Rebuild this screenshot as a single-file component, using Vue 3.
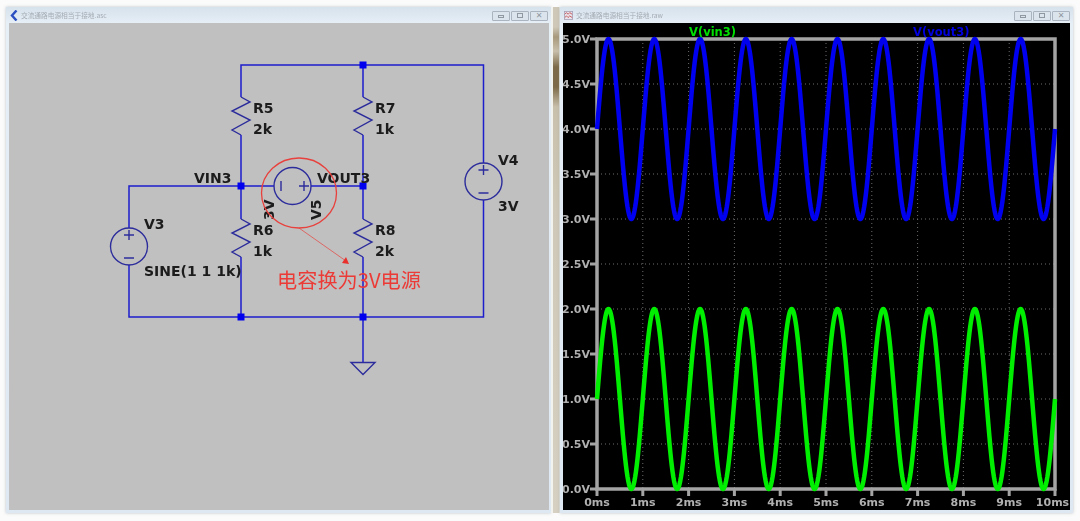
<script setup>
import { computed } from 'vue';

const plot = { left: 597, right: 1055, top: 39, bottom: 489 };
const msWidth = (plot.right - plot.left) / 10;
const voltHeight = (plot.bottom - plot.top) / 5;

const xAt = (ms) => plot.left + ms * msWidth;
const yAt = (v) => plot.bottom - v * voltHeight;

const sineWave = (offset) => {
  const points = [];
  for (let i = 0; i <= 600; i++) {
    const ms = i / 60;
    const v = offset + Math.sin(2 * Math.PI * ms);
    points.push(`${xAt(ms).toFixed(2)},${yAt(v).toFixed(2)}`);
  }
  return points.join(' ');
};

const vin = computed(() => sineWave(1));
const vout = computed(() => sineWave(4));

const msTicks = Array.from({ length: 11 }, (_, i) => ({ x: xAt(i), label: `${i}ms` }));
const voltTicks = Array.from({ length: 11 }, (_, i) => ({ y: yAt(i / 2), label: `${(i / 2).toFixed(1)}V` }));

const zigzag = (x, y) =>
  `${x},${y} ${x + 9},${y + 5} ${x - 9},${y + 14} ${x + 9},${y + 23} ${x - 9},${y + 33} ${x},${y + 38}`;

const resistors = [
  { x: 241, y: 97, name: 'R5', value: '2k' },
  { x: 363, y: 97, name: 'R7', value: '1k' },
  { x: 241, y: 219, name: 'R6', value: '1k' },
  { x: 363, y: 219, name: 'R8', value: '2k' }
];

const wires = [
  'M241 97V65H483.5V163',
  'M483.5 200V317H129V265',
  'M129 228V186H274',
  'M311 186H363',
  'M241 135V219',
  'M241 257V317',
  'M363 65V97',
  'M363 135V219',
  'M363 257V362'
];

const junctions = [
  [363, 65],
  [241, 186],
  [363, 186],
  [241, 317],
  [363, 317]
];

const sources = [
  { x: 129, y: 246.5 },
  { x: 483.5, y: 181.5 }
];
</script>

<template>
  <div class="desktop">
    <section class="window left-window">
      <header class="titlebar">
        <svg class="app-icon" width="8" height="11" viewBox="0 0 8 11">
          <path d="M6.5 .5 2 5.5l4.5 5" fill="none" stroke="#2b4fc0" stroke-width="2.4" />
        </svg>
        <span class="title">交流通路电源相当于接地.asc</span>
        <div class="win-buttons">
          <span class="win-btn"><i class="min"></i></span>
          <span class="win-btn"><i class="max"></i></span>
          <span class="win-btn"><i class="close">✕</i></span>
        </div>
      </header>
      <svg class="schematic" viewBox="9 23 540 487" width="540" height="487">
        <path v-for="d in wires" :key="d" :d="d" class="wire" />
        <polyline v-for="r in resistors" :key="r.name" :points="zigzag(r.x, r.y)" class="symbol" />
        <template v-for="r in resistors" :key="r.name + 'label'">
          <text :x="r.x + 12" :y="r.y + 16" class="label">{{ r.name }}</text>
          <text :x="r.x + 12" :y="r.y + 37" class="label">{{ r.value }}</text>
        </template>
        <rect v-for="j in junctions" :key="j.join()" :x="j[0] - 3.5" :y="j[1] - 3.5" width="7" height="7" fill="#0000ee" />

        <g v-for="s in sources" :key="s.x" class="symbol">
          <circle :cx="s.x" :cy="s.y" r="18.5" />
          <path :d="`M${s.x - 5} ${s.y - 11.5}h10M${s.x} ${s.y - 16.5}v10M${s.x - 5} ${s.y + 11.5}h10`" />
        </g>
        <g class="symbol">
          <circle cx="292.5" cy="186" r="18.5" />
          <path d="M281 181v10M299 186h10M304 181v10" />
          <path d="M351 362.5h24l-12 12z" />
        </g>

        <text x="194" y="183" class="label">VIN3</text>
        <text x="317" y="183" class="label">VOUT3</text>
        <text x="144" y="229" class="label">V3</text>
        <text x="144" y="276" class="label">SINE(1 1 1k)</text>
        <text x="498" y="165" class="label">V4</text>
        <text x="498" y="211" class="label">3V</text>
        <text transform="translate(274 220) rotate(-90)" class="label">3V</text>
        <text transform="translate(321 220) rotate(-90)" class="label">V5</text>

        <ellipse cx="299" cy="193" rx="37.5" ry="35" class="mark" />
        <path d="M299 228 346 261" class="mark thin" />
        <path d="M349 264 342 263 346 257z" fill="#e8302c" />
        <text x="277" y="288" class="note">电容换为3V电源</text>
      </svg>
    </section>

    <div class="splitter"></div>

    <section class="window right-window">
      <header class="titlebar">
        <svg class="app-icon" width="9" height="9" viewBox="0 0 11 11">
          <rect x="0.5" y="0.5" width="10" height="10" fill="#e8e4ec" stroke="#a8a0b8" />
          <path d="M1 4 3 2l2 2 2-2 3 2M1 8l2-2 2 2 2-2 3 2" fill="none" stroke="#c04040" />
        </svg>
        <span class="title">交流通路电源相当于接地.raw</span>
        <div class="win-buttons">
          <span class="win-btn"><i class="min"></i></span>
          <span class="win-btn"><i class="max"></i></span>
          <span class="win-btn"><i class="close">✕</i></span>
        </div>
      </header>
      <svg class="waveform" viewBox="563 23 507 487" width="507" height="487">
        <line v-for="t in msTicks.slice(1, 10)" :key="t.x" :x1="t.x" :x2="t.x" :y1="plot.top" :y2="plot.bottom" class="grid" />
        <line v-for="t in voltTicks.slice(1, 10)" :key="t.y" :x1="plot.left" :x2="plot.right" :y1="t.y" :y2="t.y" class="grid" />

        <rect :x="plot.left" :y="plot.top" :width="plot.right - plot.left" :height="plot.bottom - plot.top" class="frame" />
        <line v-for="t in msTicks" :key="t.label" :x1="t.x" :x2="t.x" :y1="plot.bottom" :y2="plot.bottom + 7" class="tick" />
        <line v-for="t in voltTicks" :key="t.label" :x1="plot.left - 7" :x2="plot.left" :y1="t.y" :y2="t.y" class="tick" />

        <polyline :points="vout" class="trace blue" />
        <polyline :points="vin" class="trace green" />

        <text v-for="t in voltTicks" :key="t.label" :x="plot.left - 7" :y="t.y + 4" class="axis" text-anchor="end">{{ t.label }}</text>
        <text v-for="t in msTicks" :key="t.label" :x="Math.min(t.x, 1052.5)" y="506" class="axis" text-anchor="middle">{{ t.label }}</text>

        <text x="689" y="36" class="legend" fill="#00e000">V(vin3)</text>
        <text x="913" y="36" class="legend" fill="#0000e0">V(vout3)</text>
      </svg>
    </section>
  </div>
</template>

<style scoped>
.desktop {
  width: 1080px;
  height: 521px;
  box-sizing: border-box;
  padding: 7px 7px 8px 6px;
  display: flex;
  background: #fbfbfb;
  overflow: hidden;
}

.window {
  display: flex;
  flex-direction: column;
  box-sizing: border-box;
  padding: 0 3px 3px;
  background: linear-gradient(#d6e2ec, #e6eef6 16px, #dde8f2);
  box-shadow: 0 0 3px rgba(120, 130, 140, 0.45);
}

.left-window {
  width: 545px;
}

.right-window {
  width: 513px;
}

.splitter {
  width: 9px;
  box-sizing: border-box;
  background: linear-gradient(90deg, #f2f2ee 0 22%, transparent 22% 90%, #e6e6df 90%),
    linear-gradient(#cfc8b8 0 20px, #a8997c 30px, #c9c0ac 44px, #7d6a48 60px, #7d6a48 80px, #c9c0ac 100px, #cfc8b8 200px, #d6d0c2 100%);
}

.titlebar {
  height: 16px;
  display: flex;
  align-items: center;
  gap: 3px;
  flex-shrink: 0;
}

.app-icon {
  flex-shrink: 0;
  margin-left: 1px;
}

.title {
  font: 6.7px "Noto Sans CJK SC", "Liberation Sans", sans-serif;
  color: #a4aab2;
  filter: blur(0.4px);
  white-space: nowrap;
}

.win-buttons {
  margin-left: auto;
  display: flex;
  gap: 1px;
  margin-top: 1px;
}

.win-btn {
  width: 16px;
  height: 8px;
  display: flex;
  align-items: center;
  justify-content: center;
  border: 1px solid #aab4c0;
  border-radius: 1px;
  background: #dbe4ec;
}

.win-btn i {
  font-style: normal;
}

.min {
  width: 6px;
  height: 3px;
  border: 1px solid #8f97a1;
  box-sizing: border-box;
  margin-top: 2px;
}

.max {
  width: 6px;
  height: 5px;
  border: 1px solid #8f97a1;
  box-sizing: border-box;
}

.close {
  font: 8px "DejaVu Sans", sans-serif;
  color: #8f97a1;
}

.schematic {
  display: block;
  flex-shrink: 0;
  background: #c0c0c0;
  filter: blur(0.3px);
}

.waveform {
  display: block;
  flex-shrink: 0;
  background: #000;
  filter: blur(0.3px);
}

.wire {
  fill: none;
  stroke: #1d1dcc;
  stroke-width: 1.5;
}

.symbol {
  fill: none;
  stroke: #2c2c9c;
  stroke-width: 1.4;
}

.label {
  font: bold 14px "DejaVu Sans", sans-serif;
  fill: #1c1c1c;
}

.mark {
  fill: none;
  stroke: #e8403c;
  stroke-width: 1.3;
}

.thin {
  stroke-width: 0.7;
}

.note {
  font: 20.2px "Noto Sans CJK SC", "Liberation Sans", sans-serif;
  fill: #ec3a36;
}

.grid {
  stroke: #6c6c6c;
  stroke-width: 1;
  stroke-dasharray: 1 3;
}

.frame {
  fill: none;
  stroke: #a4a4a4;
  stroke-width: 3.5;
}

.tick {
  stroke: #a4a4a4;
  stroke-width: 3;
}

.trace {
  fill: none;
  stroke-width: 4.5;
  stroke-linejoin: round;
}

.blue {
  stroke: #0000f0;
}

.green {
  stroke: #00ee00;
}

.axis {
  font: bold 11px "DejaVu Sans", sans-serif;
  fill: #b0b0b0;
}

.legend {
  font: bold 11.5px "DejaVu Sans", sans-serif;
}
</style>
